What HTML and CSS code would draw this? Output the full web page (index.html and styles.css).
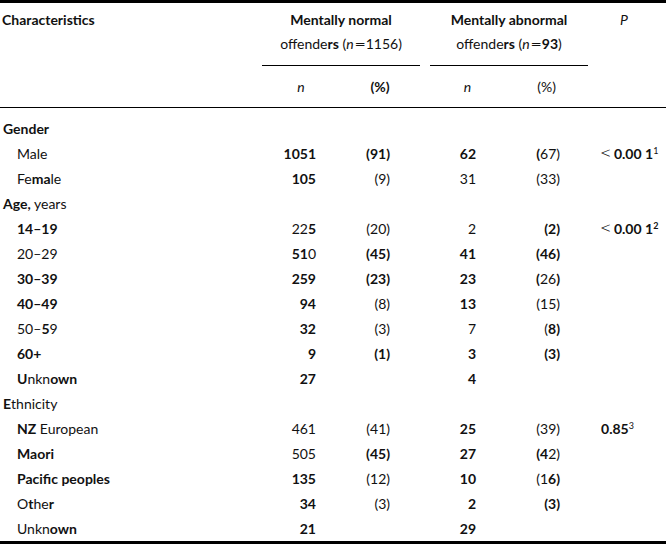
FILE: index.html
```html
<!DOCTYPE html>
<html>
<head>
<meta charset="utf-8">
<link rel="stylesheet" href="styles.css">
</head>
<body>
<table class="tbl">
  <colgroup>
    <col class="c-label">
    <col class="c-n1">
    <col class="c-p1">
    <col class="c-sp">
    <col class="c-n2">
    <col class="c-p2">
    <col class="c-sp2">
    <col class="c-pv">
  </colgroup>
  <thead>
    <tr class="h1">
      <th class="lbl" rowspan="2"><b>Characteristics</b></th>
      <th class="grp" colspan="2"><b>Mentally normal</b><br>offende<b>rs</b> (<i>n</i><span class="eq">=</span>1156)</th>
      <th class="sp"></th>
      <th class="grp" colspan="2"><b>Mentally abnormal</b><br>offende<b>rs</b> (<i>n</i><span class="eq">=</span><b>93</b>)</th>
      <th class="sp"></th>
      <th class="pv"><i>P</i></th>
    </tr>
    <tr class="h2">
      <th class="sub"><i>n</i></th>
      <th class="sub"><b>(%)</b></th>
      <th class="sp"></th>
      <th class="sub"><i>n</i></th>
      <th class="sub">(%)</th>
      <th class="sp"></th>
      <th></th>
    </tr>
  </thead>
  <tbody>
    <tr class="first"><td class="sec"><b>Gender</b></td><td></td><td></td><td></td><td></td><td></td><td></td><td></td></tr>
    <tr><td class="it">Male</td><td class="n1"><b>1051</b></td><td class="p1"><b>(91)</b></td><td></td><td class="n2"><b>62</b></td><td class="p2"><b>(</b>67)</td><td></td><td class="pv"><span class="lt">&lt;</span><b>0.00 1</b><sup>1</sup></td></tr>
    <tr><td class="it">Fe<b>ma</b>le</td><td class="n1"><b>105</b></td><td class="p1">(9)</td><td></td><td class="n2">31</td><td class="p2">(33)</td><td></td><td></td></tr>
    <tr><td class="sec"><b>Age,</b> years</td><td></td><td></td><td></td><td></td><td></td><td></td><td></td></tr>
    <tr><td class="it"><b>14–19</b></td><td class="n1">22<b>5</b></td><td class="p1">(20)</td><td></td><td class="n2">2</td><td class="p2"><b>(2)</b></td><td></td><td class="pv"><span class="lt">&lt;</span><b>0.00 1<sup>2</sup></b></td></tr>
    <tr><td class="it">20–29</td><td class="n1"><b>51</b>0</td><td class="p1"><b>(45)</b></td><td></td><td class="n2"><b>41</b></td><td class="p2"><b>(46)</b></td><td></td><td></td></tr>
    <tr><td class="it"><b>30–39</b></td><td class="n1"><b>259</b></td><td class="p1"><b>(23)</b></td><td></td><td class="n2"><b>23</b></td><td class="p2"><b>(</b>26<b>)</b></td><td></td><td></td></tr>
    <tr><td class="it"><b>40–49</b></td><td class="n1"><b>94</b></td><td class="p1">(8)</td><td></td><td class="n2"><b>13</b></td><td class="p2">(15)</td><td></td><td></td></tr>
    <tr><td class="it">50–<b>5</b>9</td><td class="n1"><b>32</b></td><td class="p1">(3)</td><td></td><td class="n2">7</td><td class="p2">(<b>8)</b></td><td></td><td></td></tr>
    <tr><td class="it"><b>60+</b></td><td class="n1"><b>9</b></td><td class="p1"><b>(1)</b></td><td></td><td class="n2"><b>3</b></td><td class="p2"><b>(3)</b></td><td></td><td></td></tr>
    <tr><td class="it"><b>U</b>nkn<b>own</b></td><td class="n1"><b>27</b></td><td class="p1"></td><td></td><td class="n2"><b>4</b></td><td class="p2"></td><td></td><td></td></tr>
    <tr><td class="sec"><b>E</b>thnicity</td><td></td><td></td><td></td><td></td><td></td><td></td><td></td></tr>
    <tr><td class="it"><b>NZ</b> European</td><td class="n1">461</td><td class="p1">(41)</td><td></td><td class="n2"><b>25</b></td><td class="p2">(39)</td><td></td><td class="pv"><b>0.85</b><sup>3</sup></td></tr>
    <tr><td class="it"><b>Maori</b></td><td class="n1">505</td><td class="p1"><b>(45)</b></td><td></td><td class="n2"><b>27</b></td><td class="p2"><b>(4</b>2)</td><td></td><td></td></tr>
    <tr><td class="it"><b>Pacific peoples</b></td><td class="n1"><b>135</b></td><td class="p1">(12)</td><td></td><td class="n2"><b>10</b></td><td class="p2">(1<b>6)</b></td><td></td><td></td></tr>
    <tr><td class="it">O<b>t</b>he<b>r</b></td><td class="n1"><b>34</b></td><td class="p1">(3)</td><td></td><td class="n2"><b>2</b></td><td class="p2"><b>(3)</b></td><td></td><td></td></tr>
    <tr class="last"><td class="it">Unkn<b>own</b></td><td class="n1"><b>21</b></td><td class="p1"></td><td></td><td class="n2"><b>29</b></td><td class="p2"></td><td></td><td></td></tr>
  </tbody>
</table>
</body>
</html>
```

FILE: styles.css
```css
html, body {
  margin: 0;
  padding: 0;
  background: #fff;
}

body {
  font-family: Lato, "Open Sans", sans-serif;
  font-size: 14px;
  color: #111;
}

.tbl {
  width: 666px;
  table-layout: fixed;
  border-collapse: collapse;
  border-top: 3px solid #000;
  border-bottom: 3px solid #000;
}

.c-label { width: 262px; }
.c-n1 { width: 78px; }
.c-p1 { width: 80px; }
.c-sp { width: 10px; }
.c-n2 { width: 75px; }
.c-p2 { width: 83px; }
.c-sp2 { width: 12px; }
.c-pv { width: 66px; }

.tbl th, .tbl td {
  padding: 0;
  line-height: 24px;
  font-weight: normal;
  white-space: nowrap;
}

.tbl b { font-weight: 700; }

.eq {
  display: inline-block;
  transform: scaleX(1.4);
  margin: 0 2px;
}

.lt {
  display: inline-block;
  font-size: 17px;
  line-height: 0;
  transform: scaleX(1.3);
  font-weight: 300;
  margin-right: 3px;
}

thead .h1 th {
  vertical-align: top;
  padding-top: 5px;
  padding-bottom: 9px;
}

thead .h1 th.lbl {
  text-align: left;
  padding-left: 2px;
}

thead .h1 th.grp {
  text-align: center;
  border-bottom: 1px solid #000;
}

thead .h1 th.pv {
  text-align: left;
  padding-left: 20px;
}

thead .h2 th {
  padding-top: 9px;
  padding-bottom: 8px;
}

thead .h2 th.sub {
  text-align: center;
}

thead tr.h2 { border-bottom: 1px solid #000; }
thead th.lbl { border-bottom: 1px solid #000; }

tbody td {
  height: 25px;
  line-height: 25px;
}

tbody tr.first td { padding-top: 8px; }
tbody tr.last td { padding-bottom: 0; }

td.sec { padding-left: 3px; }
td.it { padding-left: 17px; }

td.n1 { text-align: right; padding-right: 24px; }
td.p1 { text-align: right; padding-right: 30px; }
td.n2 { text-align: right; padding-right: 29px; }
td.p2 { text-align: right; padding-right: 28px; }
td.pv { text-align: left; padding-left: 1px; }

sup {
  font-size: 9px;
  line-height: 0;
  vertical-align: 5px;
}
```
